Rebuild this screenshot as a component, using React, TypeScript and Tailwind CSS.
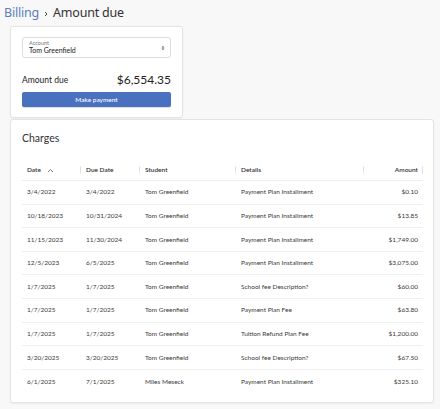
import React from "react";

const rows = [
  ["3/4/2022", "3/4/2022", "Tom Greenfield", "Payment Plan Installment", "$0.10"],
  ["10/18/2023", "10/31/2024", "Tom Greenfield", "Payment Plan Installment", "$13.85"],
  ["11/15/2023", "11/30/2024", "Tom Greenfield", "Payment Plan Installment", "$1,749.00"],
  ["12/5/2023", "6/5/2025", "Tom Greenfield", "Payment Plan Installment", "$3,075.00"],
  ["1/7/2025", "1/7/2025", "Tom Greenfield", "School fee Description?", "$60.00"],
  ["1/7/2025", "1/7/2025", "Tom Greenfield", "Payment Plan Fee", "$63.80"],
  ["1/7/2025", "1/7/2025", "Tom Greenfield", "Tuition Refund Plan Fee", "$1,200.00"],
  ["3/20/2025", "3/20/2025", "Tom Greenfield", "School fee Description?", "$67.50"],
  ["6/1/2025", "7/1/2025", "Miles Meseck", "Payment Plan Installment", "$325.10"],
];

const Sep = () => <span className="absolute right-0 top-1/2 -translate-y-1/2 h-[7px] w-px bg-[#e0e0e0]" />;

export default function App() {
  return (
    <div className="w-[440px] h-[409px] bg-[#f8f8f8] text-[#3a3a3a] font-['Lato','Noto_Sans',sans-serif] overflow-hidden">
      <div className="flex items-center h-[26px] pl-[4px] pt-[1px] font-['Noto_Sans',sans-serif] text-[12.5px] tracking-[-0.2px]">
        <span className="text-[#5a7dc0]">Billing</span>
        <svg width="10" height="10" viewBox="0 0 10 10" className="mx-[2px]">
          <path d="M4 3l2 2-2 2" fill="none" stroke="#444" strokeWidth="1" />
        </svg>
        <span className="text-[#333]">Amount due</span>
      </div>
      <div className="flex flex-col gap-[1px] pl-[10px]">
        <div className="w-[173px] bg-white border border-[#e4e4e4] rounded-[3px] shadow-[0_1px_2px_rgba(0,0,0,0.05)] px-[11px] pt-[10px] pb-[10px]">
          <div className="relative h-[21px] border border-[#dcdcdc] rounded-[3px] pl-[6px] flex flex-col justify-center">
            <span className="text-[5.5px] leading-[6px] text-[#777]">Account</span>
            <span className="text-[7px] leading-[9px] text-[#222]">Tom Greenfield</span>
            <svg width="4" height="6" viewBox="0 0 4 6" className="absolute right-[5px] top-[7px]">
              <path d="M0.5 2.4L2 1l1.5 1.4zM0.5 3.6L2 5l1.5-1.4z" fill="#555" />
            </svg>
          </div>
          <div className="flex items-center justify-between mt-[12px] h-[20px]">
            <span className="text-[8.5px] text-[#222]">Amount due</span>
            <span className="text-[12px] text-[#222]">$6,554.35</span>
          </div>
          <div className="mt-[2px] h-[15px] bg-[#4a70c0] rounded-[2px] flex items-center justify-center text-white text-[6.5px] font-medium shadow-[0_1px_1px_rgba(0,0,0,0.15)]">
            Make payment
          </div>
        </div>
        <div className="w-[424px] h-[284px] bg-white border border-[#e4e4e4] rounded-[3px] shadow-[0_1px_2px_rgba(0,0,0,0.05)] px-[11px] pt-[10px]">
          <div className="text-[10.5px] leading-[16px] text-[#333]">Charges</div>
          <div className="mt-[14px] w-[401px] text-[6.5px]">
            <div className="grid grid-cols-[59px_59px_96px_128px_59px] h-[21px] items-center border-b border-[#eeeeee] font-semibold text-[#333]">
              <div className="relative pl-[5px] flex items-center h-full">
                Date
                <svg width="7" height="5" viewBox="0 0 7 5" className="ml-[6px]">
                  <path d="M1 4l2.5-2.5L6 4" fill="none" stroke="#666" strokeWidth="0.9" />
                </svg>
                <Sep />
              </div>
              <div className="relative pl-[5px] flex items-center h-full">Due Date<Sep /></div>
              <div className="relative pl-[5px] flex items-center h-full">Student<Sep /></div>
              <div className="relative pl-[5px] flex items-center h-full">Details<Sep /></div>
              <div className="relative pr-[5px] flex items-center justify-end h-full">Amount<Sep /></div>
            </div>
            {rows.map((r, i) => (
              <div
                key={i}
                className={`grid grid-cols-[59px_59px_96px_128px_59px] h-[23.6px] items-center text-[#3a3a3a] ${i < rows.length - 1 ? "border-b border-[#f0f0f0]" : ""}`}
              >
                <div className="pl-[5px]">{r[0]}</div>
                <div className="pl-[5px]">{r[1]}</div>
                <div className="pl-[5px]">{r[2]}</div>
                <div className="pl-[5px]">{r[3]}</div>
                <div className="pr-[5px] text-right">{r[4]}</div>
              </div>
            ))}
          </div>
        </div>
      </div>
    </div>
  );
}
